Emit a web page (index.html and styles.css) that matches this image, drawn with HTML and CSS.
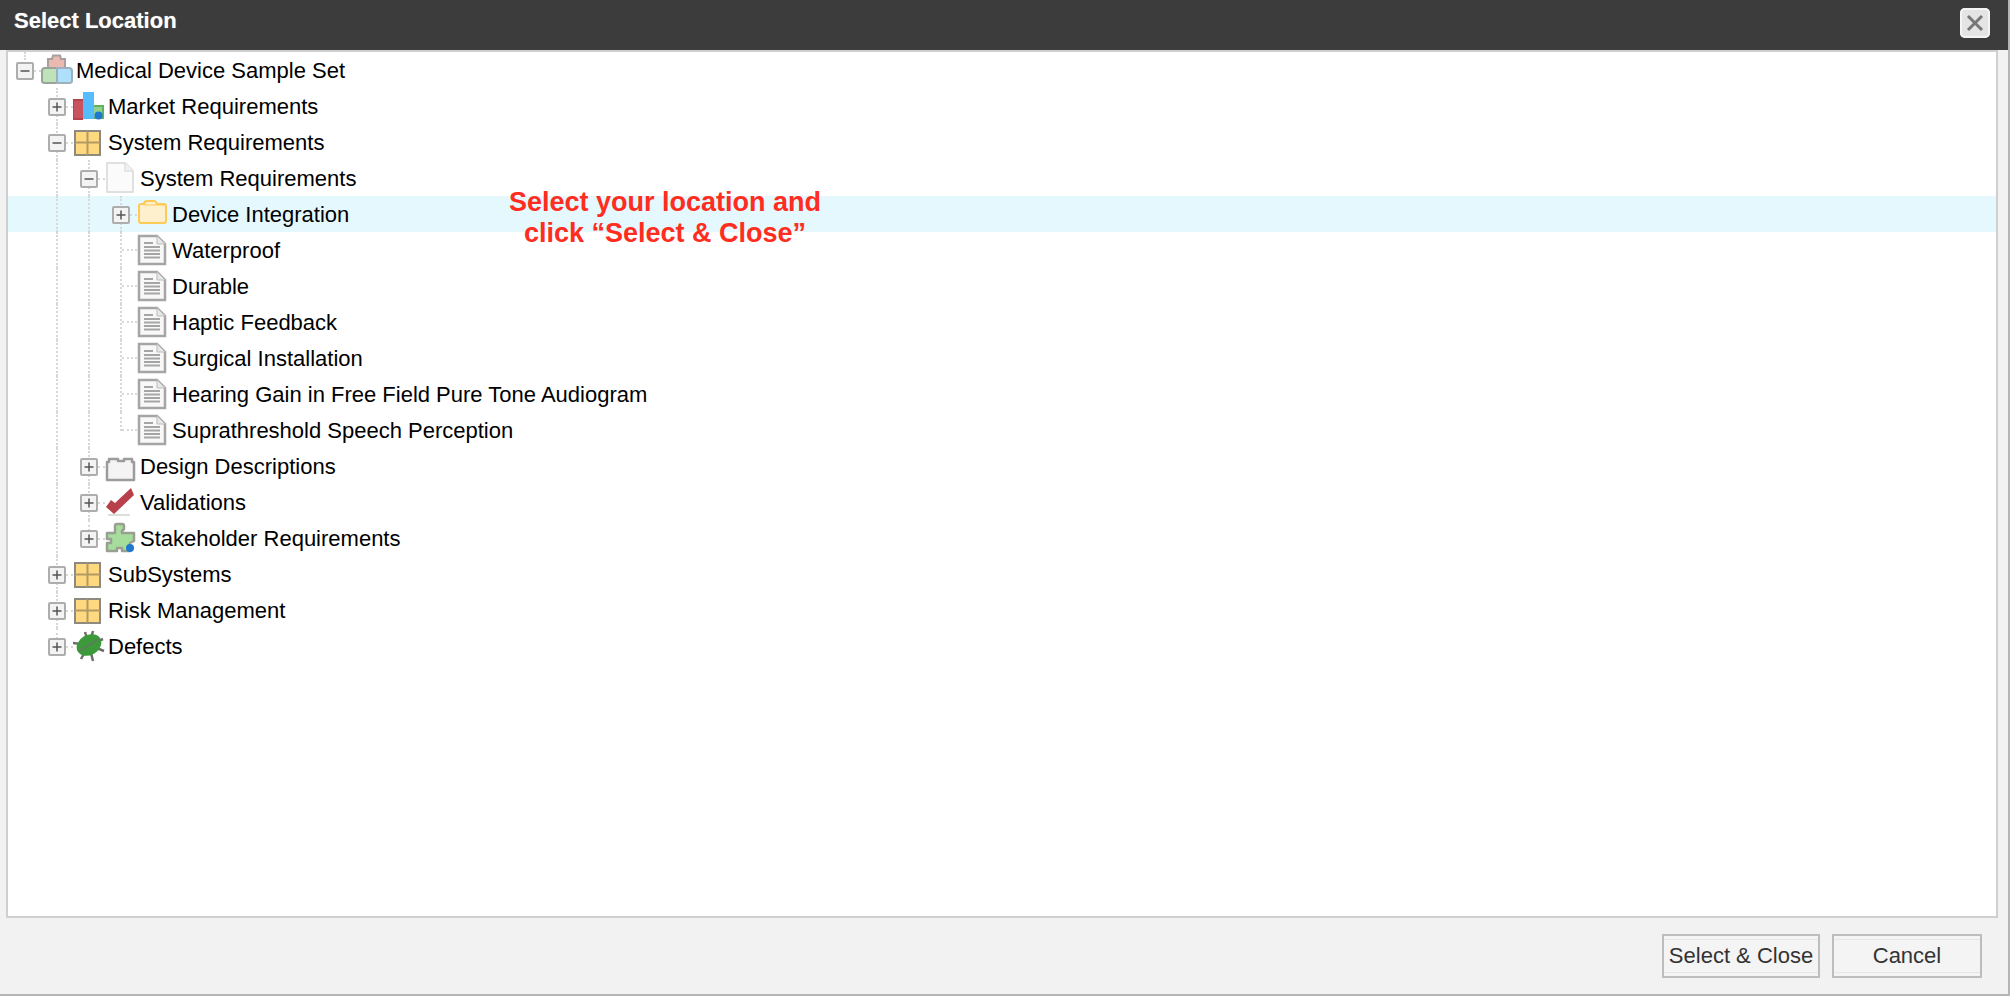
FILE: index.html
```html
<!DOCTYPE html>
<html lang="en">
<head>
<meta charset="utf-8">
<title>Select Location</title>
<link rel="stylesheet" href="styles.css">
</head>
<body>
<svg class="defs" width="0" height="0" aria-hidden="true">
  <defs>
    <symbol id="i-root" viewBox="0 0 32 32">
      <path d="M7 5h4l1-3.500h7l1 3.500h4v12H7z" fill="#eab9b0" stroke="#a89f9d" stroke-width="2"/>
      <path d="M1 17q0-3 3-3h12v15H4q-3 0-3-2z" fill="#bfe2b8" stroke="#9aa39a" stroke-width="2"/>
      <path d="M16 14h12q3 0 3 3v10q0 2-3 2H16z" fill="#aee0fb" stroke="#9db0bb" stroke-width="2"/>
    </symbol>
    <symbol id="i-market" viewBox="0 0 32 32">
      <rect x="0" y="10" width="10" height="19" fill="#c9545f"/>
      <path d="M0 10h10M0 10v19M0 29h10" stroke="#b5424c" stroke-width="2"/>
      <rect x="10" y="2" width="11" height="27" fill="#55bdfb"/>
      <rect x="21" y="15" width="10" height="14" fill="#93d28e"/>
      <path d="M21 16h10M30 15v14M21 28h10" stroke="#63b05f" stroke-width="2"/>
      <circle cx="25.500" cy="25.500" r="4" fill="#1f78d0"/>
    </symbol>
    <symbol id="i-grid" viewBox="0 0 32 32">
      <rect x="2" y="5" width="25" height="24" fill="#ffd97f" stroke="#8e8a80" stroke-width="2"/>
      <path d="M14.500 5v24M2 16.500h25" stroke="#b39a62" stroke-width="2"/>
    </symbol>
    <symbol id="i-page" viewBox="0 0 32 32">
      <path d="M2 1h18l8 8v21H2z" fill="#fbfbfb" stroke="#e0e0e0" stroke-width="2" stroke-linejoin="round"/>
      <path d="M20 1v8h8" fill="#f2f2f2" stroke="#e0e0e0" stroke-width="1.500"/>
    </symbol>
    <symbol id="i-folder" viewBox="0 0 32 32">
      <path d="M2 8q0-2 2-2h3q0-3 3-3h7q2 0 3 3h7q2 0 2 2v15q0 2-2 2H4q-2 0-2-2z" fill="#fff0cd" stroke="#fdcb55" stroke-width="2"/>
      <path d="M7 7h21" stroke="#fdcb55"/>
    </symbol>
    <symbol id="i-doc" viewBox="0 0 32 32">
      <path d="M2 2h18l8 8v20H2z" fill="#f8f8f8" stroke="#a5a5a5" stroke-width="2.500"/>
      <path d="M20 2v8h8" fill="#e8e8e8" stroke="#bbb"/>
      <path d="M7 9h9M7 13h16M7 16.500h16M7 20h16M7 23.500h16" stroke="#a5a5a5" stroke-width="2"/>
    </symbol>
    <symbol id="i-design" viewBox="0 0 32 32">
      <path d="M2 30V12h2V9h9v2h6V9h8v3h2v18z" fill="#f4f4f4" stroke="#9c9c9c" stroke-width="2.500" stroke-linejoin="round"/>
    </symbol>
    <symbol id="i-check" viewBox="0 0 32 32">
      <path d="M1 21l5-7 4 3L26 2l3 7L9 28z" fill="#b8404b"/>
      <path d="M3 29h22" stroke="#ddd" stroke-width="2"/>
    </symbol>
    <symbol id="i-puzzle" viewBox="0 0 32 32">
      <path d="M2 11h8V4q0-2 2-2h5q2 0 2 2v3l-2 2v2h12v8l-4 2v8h-8v-3h-5v3H2v-8h4v-4H2z" fill="#a6dc9c" stroke="#99a092" stroke-width="2.500" stroke-linejoin="round"/>
      <circle cx="25" cy="26" r="4" fill="#1f78d0"/>
    </symbol>
    <symbol id="i-bug" viewBox="0 0 32 32">
      <path d="M16 15L12 2M16 15L20 1M16 15L30 9M16 15L0 13M16 15L8 29M16 15L20 31M16 15L31 21" stroke="#6d6d6d" stroke-width="2.500"/>
      <ellipse cx="16" cy="15" rx="13" ry="10" transform="rotate(-30 16 15)" fill="#3d9a3a"/>
      <path d="M6 21L26 9" stroke="#5f7a5c" stroke-width="1.500"/>
    </symbol>
    <symbol id="i-plus" viewBox="0 0 18 18">
      <rect x="1" y="1" width="16" height="16" rx="1" fill="#f3f3f3" stroke="#adadad" stroke-width="2"/>
      <path d="M4.500 9h9M9 4.500v9" stroke="#555" stroke-width="1.500"/>
    </symbol>
    <symbol id="i-minus" viewBox="0 0 18 18">
      <rect x="1" y="1" width="16" height="16" rx="1" fill="#f3f3f3" stroke="#adadad" stroke-width="2"/>
      <path d="M4.500 9h9" stroke="#555" stroke-width="1.500"/>
    </symbol>
  </defs>
</svg>

<div class="dialog">
  <header class="titlebar">
    <h1 class="title">Select Location</h1>
    <button class="close" type="button" aria-label="Close">
      <svg width="18" height="18" viewBox="0 0 18 18"><path d="M2 2l14 14M16 2L2 16" stroke="#777" stroke-width="3"/></svg>
    </button>
  </header>

  <main class="panel">
    <ul class="tree">
      <li class="row"><span class="cell toggle stub"><svg class="tg"><use href="#i-minus"/></svg></span><svg class="icon"><use href="#i-root"/></svg><span class="label">Medical Device Sample Set</span></li>

      <li class="row"><span class="cell"></span><span class="cell toggle"><svg class="tg"><use href="#i-plus"/></svg></span><svg class="icon"><use href="#i-market"/></svg><span class="label">Market Requirements</span></li>
      <li class="row"><span class="cell"></span><span class="cell toggle"><svg class="tg"><use href="#i-minus"/></svg></span><svg class="icon"><use href="#i-grid"/></svg><span class="label">System Requirements</span></li>
      <li class="row"><span class="cell"></span><span class="cell line"></span><span class="cell toggle"><svg class="tg"><use href="#i-minus"/></svg></span><svg class="icon"><use href="#i-page"/></svg><span class="label">System Requirements</span></li>

      <li class="row selected"><span class="cell"></span><span class="cell line"></span><span class="cell line"></span><span class="cell toggle"><svg class="tg"><use href="#i-plus"/></svg></span><svg class="icon"><use href="#i-folder"/></svg><span class="label">Device Integration</span></li>
      <li class="row"><span class="cell"></span><span class="cell line"></span><span class="cell line"></span><span class="cell tee"></span><svg class="icon"><use href="#i-doc"/></svg><span class="label">Waterproof</span></li>
      <li class="row"><span class="cell"></span><span class="cell line"></span><span class="cell line"></span><span class="cell tee"></span><svg class="icon"><use href="#i-doc"/></svg><span class="label">Durable</span></li>
      <li class="row"><span class="cell"></span><span class="cell line"></span><span class="cell line"></span><span class="cell tee"></span><svg class="icon"><use href="#i-doc"/></svg><span class="label">Haptic Feedback</span></li>
      <li class="row"><span class="cell"></span><span class="cell line"></span><span class="cell line"></span><span class="cell tee"></span><svg class="icon"><use href="#i-doc"/></svg><span class="label">Surgical Installation</span></li>
      <li class="row"><span class="cell"></span><span class="cell line"></span><span class="cell line"></span><span class="cell tee"></span><svg class="icon"><use href="#i-doc"/></svg><span class="label">Hearing Gain in Free Field Pure Tone Audiogram</span></li>
      <li class="row"><span class="cell"></span><span class="cell line"></span><span class="cell line"></span><span class="cell tee end"></span><svg class="icon"><use href="#i-doc"/></svg><span class="label">Suprathreshold Speech Perception</span></li>

      <li class="row"><span class="cell"></span><span class="cell line"></span><span class="cell toggle"><svg class="tg"><use href="#i-plus"/></svg></span><svg class="icon"><use href="#i-design"/></svg><span class="label">Design Descriptions</span></li>
      <li class="row"><span class="cell"></span><span class="cell line"></span><span class="cell toggle"><svg class="tg"><use href="#i-plus"/></svg></span><svg class="icon"><use href="#i-check"/></svg><span class="label">Validations</span></li>
      <li class="row"><span class="cell"></span><span class="cell line"></span><span class="cell toggle end"><svg class="tg"><use href="#i-plus"/></svg></span><svg class="icon"><use href="#i-puzzle"/></svg><span class="label">Stakeholder Requirements</span></li>

      <li class="row"><span class="cell"></span><span class="cell toggle"><svg class="tg"><use href="#i-plus"/></svg></span><svg class="icon"><use href="#i-grid"/></svg><span class="label">SubSystems</span></li>
      <li class="row"><span class="cell"></span><span class="cell toggle"><svg class="tg"><use href="#i-plus"/></svg></span><svg class="icon"><use href="#i-grid"/></svg><span class="label">Risk Management</span></li>
      <li class="row"><span class="cell"></span><span class="cell toggle end"><svg class="tg"><use href="#i-plus"/></svg></span><svg class="icon"><use href="#i-bug"/></svg><span class="label">Defects</span></li>
    </ul>
    <p class="callout">Select your location and<br>click “Select &amp; Close”</p>
  </main>

  <footer class="actions">
    <button class="btn btn-select" type="button">Select &amp; Close</button>
    <button class="btn btn-cancel" type="button">Cancel</button>
  </footer>
</div>
</body>
</html>
```

FILE: styles.css
```css
* { box-sizing: border-box; }

html, body {
  margin: 0;
  height: 100%;
}

body {
  font-family: "Liberation Sans", Arial, sans-serif;
  color: #000;
  background: #f2f2f2;
  overflow: hidden;
}

.defs { position: absolute; }

.dialog {
  display: flex;
  flex-direction: column;
  height: 996px;
  background: #f2f2f2;
  border-right: 2px solid #b5b5b5;
  border-bottom: 2px solid #b5b5b5;
}

.titlebar {
  flex: 0 0 50px;
  display: flex;
  align-items: center;
  justify-content: space-between;
  padding: 0 18px 0 14px;
  background: #3c3c3c;
}

.title {
  margin: 0 0 9px;
  font-size: 22px;
  font-weight: 700;
  color: #fff;
  text-shadow: 0 0 1px rgba(255, 255, 255, 0.5);
}

.close {
  display: flex;
  align-items: center;
  justify-content: center;
  width: 30px;
  height: 30px;
  margin-bottom: 5px;
  padding: 0;
  border: 0;
  border-radius: 5px;
  background: #e4e4e4;
  box-shadow: inset 0 0 0 2px #f4f4f4;
}

.panel {
  position: relative;
  flex: 0 0 868px;
  margin: 0 10px 0 6px;
  border: 2px solid #cfcfcf;
  background: #fff;
}

.tree {
  margin: 0;
  padding: 0;
  list-style: none;
}

.row {
  display: flex;
  align-items: center;
  height: 36px;
  padding-left: 1px;
  font-size: 22px;
}

.selected { background: #e5f8fe; }

.cell {
  position: relative;
  flex: 0 0 32px;
  align-self: stretch;
}

.line::before,
.tee::before,
.toggle::before {
  content: "";
  position: absolute;
  left: 15px;
  top: 0;
  bottom: 0;
  border-left: 2px dotted #d8d8d8;
}

.end::before { bottom: 17px; }

.stub::before { bottom: 28px; }

.tee::after {
  content: "";
  position: absolute;
  left: 17px;
  right: 0;
  top: 17px;
  border-top: 2px dotted #d8d8d8;
}

.toggle::after {
  content: "";
  position: absolute;
  left: 25px;
  right: 0;
  top: 18px;
  border-top: 2px dotted #d8d8d8;
}

.tg {
  position: relative;
  z-index: 1;
  display: block;
  width: 18px;
  height: 18px;
  margin: 10px 0 0 7px;
}

.icon {
  flex: 0 0 32px;
  width: 32px;
  height: 32px;
}

.label {
  margin-left: 3px;
  padding-top: 1px;
  white-space: nowrap;
}

.callout {
  position: absolute;
  left: 298px;
  top: 135px;
  width: 718px;
  margin: 0;
  font-size: 27px;
  font-weight: 700;
  line-height: 31px;
  text-align: center;
  color: #ff2d20;
}

.actions {
  flex: 1;
  display: flex;
  justify-content: flex-end;
  align-items: flex-start;
  gap: 12px;
  padding: 16px 26px 0 0;
}

.btn {
  height: 44px;
  padding: 0;
  border: 2px solid #bdbdbd;
  background: #f4f4f4;
  box-shadow: inset 0 3px 0 #f4f4f4, inset 0 4px 0 #e6e6e6, inset 0 -3px 0 #f4f4f4, inset 0 -4px 0 #e6e6e6;
  font-family: "Liberation Sans", Arial, sans-serif;
  font-size: 22px;
  color: #333;
}

.btn-select { width: 158px; }
.btn-cancel { width: 150px; }
```
